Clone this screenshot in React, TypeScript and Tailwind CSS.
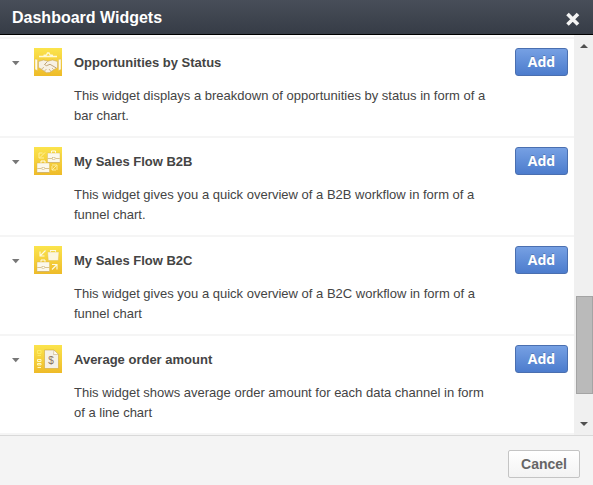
import type { ReactNode } from "react"

interface Widget {
  id: string
  title: string
  description: string[]
  icon: ReactNode
}

function Handshake() {
  return (
    <g>
      <path d="M5 8.500h18M9.500 7.500l3-.5 1-2h1.500l1 2 3 .5" fill="none" stroke="#fffad6" strokeWidth="1.300" />
      <path d="M1 11l2.500.5v11l-2.500-1z M27 11l-2.500.5v11l2.500-1z" fill="#fffbe6" stroke="#d9b65a" strokeWidth=".4" />
      <path
        d="M4.500 13.500l5-1.500 4.500 1.200 4.500-1.200 5 1.500v6l-2.500 1.500-5.500 3.500-3 .2-5.500-3.700-2.500-1.500z"
        fill="#f7f1e4"
        stroke="#c9a964"
        strokeWidth=".6"
      />
      <path d="M13.500 13.500l-3 3 2 1.200 3.500-1.400 6 3.500" fill="none" stroke="#b3925e" strokeWidth=".8" />
      <path d="M7.500 21l2.500-1.700M10.500 23l2-2M15 21l2 2.500M18 20l1.500 1.500" stroke="#c2a468" strokeWidth=".7" />
    </g>
  )
}

function Briefcase({ x, y }: { x: number; y: number }) {
  return (
    <g transform={`translate(${x} ${y})`}>
      <path d="M4.500 3.500v-2.500h4v2.500" fill="none" stroke="#fffdf0" strokeWidth="1" />
      <rect x=".5" y="3" width="12.500" height="9.500" rx=".5" fill="#fbf8ec" stroke="#d3b354" strokeWidth=".4" />
      <path d="M.8 8.500h4.200M8.500 8.500h4.200M.8 12.500h12" stroke="#cbae68" strokeWidth=".7" />
      <rect x="5.500" y="7.500" width="2.500" height="2" fill="#fff" stroke="#c9ad6c" strokeWidth=".5" />
    </g>
  )
}

function B2BFlow() {
  return (
    <g>
      <Briefcase x={13} y={3} />
      <Briefcase x={2.500} y={13} />
      <path d="M11 5.500l-5 5M5 6v5h5M5 6h3.500M18 23l4.500-4.500M18 18h5v5M18 19v4h4" fill="none" stroke="#fff3aa" strokeWidth=".9" />
    </g>
  )
}

function B2CFlow() {
  return (
    <g>
      <path d="M16.500 7v-2.500h5v2.500" fill="none" stroke="#fffbe0" strokeWidth="1.100" />
      <path d="M13.500 6h11.500l-.7 8.500h-10z" fill="#fcf7e0" stroke="#e1bc3c" strokeWidth=".4" />
      <Briefcase x={2.500} y={13} />
      <path d="M11.500 4.500l-5 5M6 5.500v4.500h4.500M18 23.500l4.500-4.500M18 18.500h5v5" fill="none" stroke="#fffbe0" strokeWidth="1.100" />
    </g>
  )
}

function OrderDocument() {
  return (
    <g>
      <path d="M3.500 5.500h3.500v3h-3.500zM3.500 10.500h3.500" fill="none" stroke="#fff06c" strokeWidth=".8" />
      <path d="M3.500 14.500h3.500v2h-3.500zM3.500 18.500h3.500v1.500h-3.500zM3.500 22.500h3.500" fill="#f7cf2e" stroke="#fff9c2" strokeWidth="1" />
      <path d="M10.500 5h9.500l4.500 4.500v14h-14z" fill="#f5f1e7" stroke="#c99f28" strokeWidth=".5" />
      <path d="M20 5l-.5 4.500h5z" fill="#fffdf5" stroke="#bea36b" strokeWidth=".5" />
      <text x="17" y="19" textAnchor="middle" fontSize="10" fill="#8b7460" fontFamily="Liberation Sans, Arial, sans-serif">
        $
      </text>
    </g>
  )
}

const widgets: Widget[] = [
  {
    id: "opportunities",
    title: "Opportunities by Status",
    description: ["This widget displays a breakdown of opportunities by status in form of a", "bar chart."],
    icon: <Handshake />,
  },
  {
    id: "b2b",
    title: "My Sales Flow B2B",
    description: ["This widget gives you a quick overview of a B2B workflow in form of a", "funnel chart."],
    icon: <B2BFlow />,
  },
  {
    id: "b2c",
    title: "My Sales Flow B2C",
    description: ["This widget gives you a quick overview of a B2C workflow in form of a", "funnel chart"],
    icon: <B2CFlow />,
  },
  {
    id: "average",
    title: "Average order amount",
    description: ["This widget shows average order amount for each data channel in form", "of a line chart"],
    icon: <OrderDocument />,
  },
]

function WidgetRow({ widget }: { widget: Widget }) {
  return (
    <div className="flex h-[99px] items-start border-b-2 border-[#f5f5f5] pt-[9px]">
      <button className="flex h-7 w-[34px] items-center pt-[3px] pl-3" aria-label="Toggle description">
        <svg width="8" height="5" viewBox="0 0 8 5">
          <path d="M0 0h7.500L3.750 4.300z" fill="#777" />
        </svg>
      </button>
      <div className="h-7 w-7 bg-linear-to-b from-[#fbe44c] to-[#eebb28]">
        <svg width="28" height="28" viewBox="0 0 28 28">
          {widget.icon}
        </svg>
      </div>
      <div className="w-[453px] pl-3 text-[13px] leading-5 whitespace-nowrap text-[#444]">
        <h3 className="pt-[5px] font-bold">{widget.title}</h3>
        <p className="pt-[13px]">
          {widget.description[0]}
          <br />
          {widget.description[1]}
        </p>
      </div>
      <button className="h-7 w-[53px] rounded-[3px] border border-[#4a6fb0] bg-linear-to-b from-[#76a0e3] to-[#4c7ccd] pb-px font-['Open_Sans',Verdana,sans-serif] text-sm leading-[25px] font-bold text-white [text-shadow:0_-1px_0_rgba(0,0,0,0.2)]">
        Add
      </button>
    </div>
  )
}

export default function App() {
  return (
    <div className="flex h-[485px] w-[593px] flex-col overflow-hidden bg-white font-['Liberation_Sans',Arial,sans-serif]">
      {/* Title bar */}
      <div className="flex h-[35px] items-center justify-between border-b border-black bg-linear-to-b from-[#484e59] to-[#363c46] pr-3 pl-3">
        <h2 className="pt-[2px] text-base leading-8 font-bold text-white">Dashboard Widgets</h2>
        <button className="pt-[4px]" aria-label="Close">
          <svg width="16" height="15" viewBox="0 0 16 15">
            <path d="M2.500 2l10.500 10.500M13 2l-10.500 10.500" stroke="#f4f4f4" strokeWidth="3.600" />
          </svg>
        </button>
      </div>

      {/* Widget list */}
      <div className="flex h-[400px] overflow-hidden">
        <div className="flex-1">
          <div className="mt-[2px] h-[2px] bg-[#f5f5f5]" />
          {widgets.map((widget) => (
            <WidgetRow key={widget.id} widget={widget} />
          ))}
        </div>
        <div className="flex w-[19px] flex-col items-center bg-[#f0f0f0] pt-[9px] pb-[9px]">
          <svg width="8" height="4" viewBox="0 0 8 4">
            <path d="M4 0l4 4H0z" fill="#505050" />
          </svg>
          <div className="mt-[248px] h-[98px] w-[17px] self-end border border-[#a4a4a4] bg-[#bababa]" />
          <svg className="mt-auto" width="8" height="4" viewBox="0 0 8 4">
            <path d="M0 0h8L4 4z" fill="#505050" />
          </svg>
        </div>
      </div>

      {/* Footer */}
      <div className="flex flex-1 items-start justify-end border-t border-[#d9d9d9] bg-[#f4f4f4] pt-[14px] pr-[13px]">
        <button className="h-7 w-[72px] rounded-[2px] border border-[#c4c4c4] bg-linear-to-b from-white to-[#f3f3f3] text-sm leading-[26px] font-bold text-[#666]">
          Cancel
        </button>
      </div>
    </div>
  )
}
